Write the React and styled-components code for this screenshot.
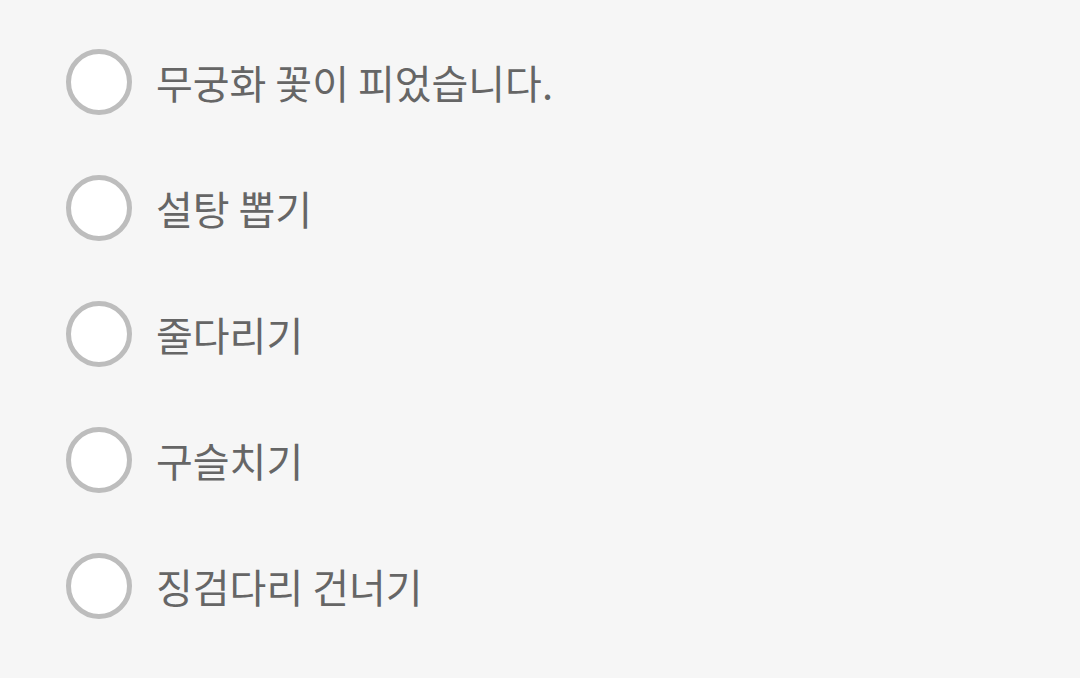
import React from 'react'
import styled, { createGlobalStyle } from 'styled-components'

const GlobalStyle = createGlobalStyle`
  html, body {
    margin: 0;
    padding: 0;
    background: #f6f6f6;
  }
  body {
    font-family: "Noto Sans CJK KR", "Noto Sans", sans-serif;
  }
`

const List = styled.div`
  display: flex;
  flex-direction: column;
  padding: 19px 0 0 66px;
  min-height: 100vh;
  box-sizing: border-box;
  background: #f6f6f6;
`

const Option = styled.label`
  display: flex;
  align-items: center;
  gap: 24px;
  height: 126px;
  cursor: pointer;
`

const Radio = styled.span`
  width: 56px;
  height: 56px;
  border-radius: 50%;
  border: 5px solid #bdbdbd;
  background: #fff;
  flex-shrink: 0;
`

const Label = styled.span`
  font-size: 40px;
  font-weight: 400;
  color: #666;
  line-height: 1;
`

const items = [
  '무궁화 꽃이 피었습니다.',
  '설탕 뽑기',
  '줄다리기',
  '구슬치기',
  '징검다리 건너기',
]

const App = () => {
  return (
    <>
      <GlobalStyle />
      <List>
        {items.map(item => (
          <Option key={item}>
            <Radio />
            <Label>{item}</Label>
          </Option>
        ))}
      </List>
    </>
  )
}

export default App
